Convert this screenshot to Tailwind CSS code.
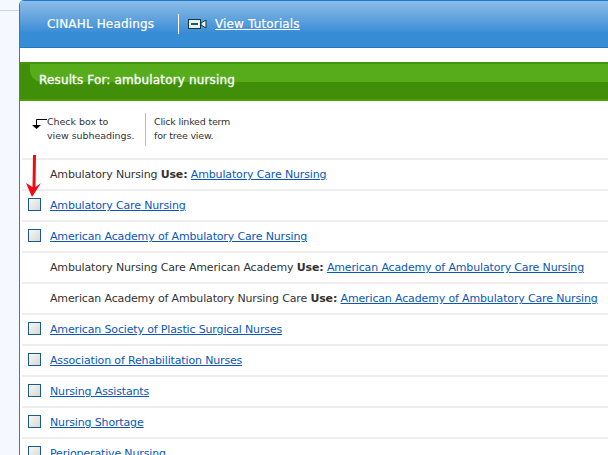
<!DOCTYPE html>
<html lang="en">
<head>
    <meta charset="UTF-8">
    <title>CINAHL Headings</title>
    <script src="https://cdn.jsdelivr.net/npm/@tailwindcss/browser@4"></script>
</head>
<body class="w-[608px] h-[455px] overflow-hidden bg-white font-['DejaVu_Sans',sans-serif] text-[11px] tracking-[-0.15px] text-[#333]">
    <div class="flex h-[455px] bg-gradient-to-r from-[#f5f9ff] to-[#e8f2fd]">
        <!-- page behind the dialog -->
        <div class="w-[19px] shrink-0 pt-[10px]">
            <div class="h-[1px] bg-[#c5d6e6]"></div>
        </div>

        <!-- dialog -->
        <div class="relative flex-1 min-w-0 bg-white border-l border-l-[#2f7cc0] rounded-tl-[5px] overflow-hidden">
            <!-- header -->
            <header class="flex items-center h-[48px] border-t border-t-[#1b7ad0] border-b border-b-[#1f78c4] bg-gradient-to-b from-[#8cbde6] via-[#378cd6] via-[70%] to-[#378cd6] text-white text-[12px] tracking-[0.15px] [-webkit-text-stroke:0.2px_white]">
                <span class="ml-[27px] w-[131px]">CINAHL Headings</span>
                <span class="w-[1px] h-[20px] bg-white"></span>
                <svg class="ml-[8px]" width="20" height="12" viewBox="0 0 20 12">
                    <rect x="1.5" y="1.5" width="12" height="9" fill="#e8f0ee" stroke="#0c3b40"/>
                    <rect x="4" y="5" width="7" height="2" fill="#1c5a60"/>
                    <path d="M14 5l5-3v8l-5-3z" fill="#e8f0ee" stroke="#0c3b40"/>
                </svg>
                <a class="ml-[8px] underline">View Tutorials</a>
            </header>

            <div class="h-[14px]"></div>

            <!-- results bar -->
            <div class="relative flex flex-col justify-center h-[39px] pb-[3px] pl-[19px] border-t-2 border-t-[#479508] border-b-2 border-b-[#4d9c0c] bg-[#418f08] text-white text-[12px] tracking-[0.15px] [-webkit-text-stroke:0.3px_white]">
                <div class="absolute left-[10px] right-0 top-0 h-[18px] rounded-bl-[12px] bg-[#57ac1c]"></div>
                <span class="relative">Results For: ambulatory nursing</span>
            </div>

            <!-- help notes -->
            <div class="flex items-center h-[58px] pb-[2px] pl-[12px] text-[9.5px] tracking-[-0.2px] leading-[14px] text-[#333] whitespace-nowrap">
                <svg class="mb-[12px]" width="15" height="14" viewBox="0 0 15 14">
                    <path d="M15 3.5H4.5V10" fill="none" stroke="#000"/>
                    <path d="M0 9h9l-4.5 4z" fill="#000"/>
                </svg>
                <div class="w-[98px] tracking-[-0.05px]">Check box to<br>view subheadings.</div>
                <span class="w-[1px] h-[33px] bg-[#bbb]"></span>
                <div class="ml-[8px]">Click linked term<br>for tree view.</div>
            </div>

            <!-- result rows -->
            <ul class="ml-[2px] -mt-[1px]">
                <li class="flex items-center h-[31px] pt-[2px] border-t-2 border-t-[#eee] pl-[28px] whitespace-nowrap">Ambulatory Nursing&nbsp;<b>Use:</b>&nbsp;<a class="text-[#0b57b8] underline">Ambulatory Care Nursing</a></li>
                <li class="flex items-center h-[31px] pt-[2px] border-t-2 border-t-[#eee] whitespace-nowrap"><span class="ml-[6px] mr-[9px] -mt-[4px] w-[13px] h-[13px] border border-[#1d5a8c] bg-gradient-to-br from-[#f7f7f3] to-[#d8d8d4]"></span><a class="text-[#0b57b8] underline">Ambulatory Care Nursing</a></li>
                <li class="flex items-center h-[31px] pt-[2px] border-t-2 border-t-[#eee] whitespace-nowrap"><span class="ml-[6px] mr-[9px] -mt-[4px] w-[13px] h-[13px] border border-[#1d5a8c] bg-gradient-to-br from-[#f7f7f3] to-[#d8d8d4]"></span><a class="text-[#0b57b8] underline">American Academy of Ambulatory Care Nursing</a></li>
                <li class="flex items-center h-[31px] pt-[2px] border-t-2 border-t-[#eee] pl-[28px] whitespace-nowrap">Ambulatory Nursing Care American Academy&nbsp;<b>Use:</b>&nbsp;<a class="text-[#0b57b8] underline">American Academy of Ambulatory Care Nursing</a></li>
                <li class="flex items-center h-[31px] pt-[2px] border-t-2 border-t-[#eee] pl-[28px] whitespace-nowrap">American Academy of Ambulatory Nursing Care&nbsp;<b>Use:</b>&nbsp;<a class="text-[#0b57b8] underline">American Academy of Ambulatory Care Nursing</a></li>
                <li class="flex items-center h-[31px] pt-[2px] border-t-2 border-t-[#eee] whitespace-nowrap"><span class="ml-[6px] mr-[9px] -mt-[4px] w-[13px] h-[13px] border border-[#1d5a8c] bg-gradient-to-br from-[#f7f7f3] to-[#d8d8d4]"></span><a class="text-[#0b57b8] underline">American Society of Plastic Surgical Nurses</a></li>
                <li class="flex items-center h-[31px] pt-[2px] border-t-2 border-t-[#eee] whitespace-nowrap"><span class="ml-[6px] mr-[9px] -mt-[4px] w-[13px] h-[13px] border border-[#1d5a8c] bg-gradient-to-br from-[#f7f7f3] to-[#d8d8d4]"></span><a class="text-[#0b57b8] underline">Association of Rehabilitation Nurses</a></li>
                <li class="flex items-center h-[31px] pt-[2px] border-t-2 border-t-[#eee] whitespace-nowrap"><span class="ml-[6px] mr-[9px] -mt-[4px] w-[13px] h-[13px] border border-[#1d5a8c] bg-gradient-to-br from-[#f7f7f3] to-[#d8d8d4]"></span><a class="text-[#0b57b8] underline">Nursing Assistants</a></li>
                <li class="flex items-center h-[31px] pt-[2px] border-t-2 border-t-[#eee] whitespace-nowrap"><span class="ml-[6px] mr-[9px] -mt-[4px] w-[13px] h-[13px] border border-[#1d5a8c] bg-gradient-to-br from-[#f7f7f3] to-[#d8d8d4]"></span><a class="text-[#0b57b8] underline">Nursing Shortage</a></li>
                <li class="flex items-center h-[31px] pt-[2px] border-t-2 border-t-[#eee] whitespace-nowrap"><span class="ml-[6px] mr-[9px] -mt-[4px] w-[13px] h-[13px] border border-[#1d5a8c] bg-gradient-to-br from-[#f7f7f3] to-[#d8d8d4]"></span><a class="text-[#0b57b8] underline">Perioperative Nursing</a></li>
            </ul>

            <!-- red annotation arrow -->
            <svg class="absolute left-[5px] top-[154px]" width="17" height="44" viewBox="0 0 17 44">
                <path d="M8 1L11 1L10.5 33L16 29L7 43L1 29L7.5 33z" fill="#f00a14"/>
            </svg>
        </div>
    </div>
</body>
</html>
